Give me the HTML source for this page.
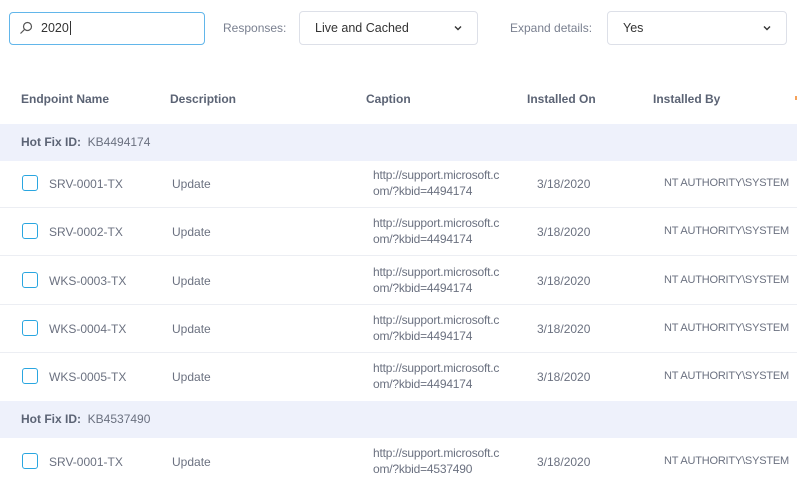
<!DOCTYPE html>
<html><head><style>
*{margin:0;padding:0;box-sizing:border-box}
body{width:797px;height:480px;overflow:hidden;background:#fff;font-family:"Liberation Sans",sans-serif;font-size:12px;color:#6b7180;position:relative}
.a{position:absolute;white-space:nowrap}
.box{position:absolute;border-radius:4px}
.h{font-weight:bold;color:#5b6374;font-size:12px}
.grp{position:absolute;left:0;width:797px;height:37px;background:#eef1fb}
.row{position:absolute;left:0;width:797px;height:48px;border-bottom:1px solid #eceef3}
.cb{position:absolute;left:22px;top:15px;width:16px;height:16px;border:1.5px solid #2aa6e0;border-radius:3px}
.row .a{top:17px}
.nt{left:664px;font-size:11px;letter-spacing:-0.2px}
.cap{position:absolute;left:373px;top:7px;line-height:16px;white-space:nowrap;letter-spacing:-0.2px}
</style></head><body>
<div class="box" style="left:9px;top:12px;width:196px;height:33px;border:1px solid #62b6ea"></div>
<svg class="a" style="left:19px;top:21px" width="14" height="14" viewBox="0 0 14 14"><circle cx="8.5" cy="5.5" r="4" fill="none" stroke="#555" stroke-width="1.2"/><line x1="5.5" y1="8.5" x2="1.5" y2="12.5" stroke="#555" stroke-width="1.2"/></svg>
<div class="a" style="left:41px;top:21px;color:#333;font-size:12.5px">2020<span style="border-left:1px solid #333;margin-left:1px"></span></div>
<div class="a" style="left:223px;top:21px;color:#7a8090">Responses:</div>
<div class="box" style="left:299px;top:11px;width:179px;height:34px;border:1px solid #dde0e8"></div>
<div class="a" style="left:315px;top:21px;color:#333;font-size:12.5px">Live and Cached</div>
<svg class="a" style="left:454px;top:25px" width="8" height="6" viewBox="0 0 8 6"><path d="M1 1.5L4 4.5L7 1.5" fill="none" stroke="#333" stroke-width="1.4"/></svg>
<div class="a" style="left:510px;top:21px;color:#7a8090">Expand details:</div>
<div class="box" style="left:607px;top:11px;width:180px;height:34px;border:1px solid #dde0e8"></div>
<div class="a" style="left:623px;top:21px;color:#333;font-size:12.5px">Yes</div>
<svg class="a" style="left:763px;top:25px" width="8" height="6" viewBox="0 0 8 6"><path d="M1 1.5L4 4.5L7 1.5" fill="none" stroke="#333" stroke-width="1.4"/></svg>

<div class="a h" style="left:21px;top:92px">Endpoint Name</div>
<div class="a h" style="left:170px;top:92px">Description</div>
<div class="a h" style="left:366px;top:92px">Caption</div>
<div class="a h" style="left:527px;top:92px">Installed On</div>
<div class="a h" style="left:653px;top:92px">Installed By</div>
<div class="a" style="left:795px;top:96px;width:2px;height:4px;background:#f5a25a"></div>

<div class="grp" style="top:124px"><div class="a" style="left:21px;top:11px"><b style="color:#5b6374">Hot Fix ID:</b>&nbsp; KB4494174</div></div>
<div class="row" style="top:160px"><div class="cb"></div><div class="a" style="left:49px">SRV-0001-TX</div><div class="a" style="left:172px">Update</div><div class="cap">http://support.microsoft.c<br>om/?kbid=4494174</div><div class="a" style="left:537px">3/18/2020</div><div class="a nt">NT AUTHORITY\SYSTEM</div></div>
<div class="row" style="top:208px"><div class="cb"></div><div class="a" style="left:49px">SRV-0002-TX</div><div class="a" style="left:172px">Update</div><div class="cap">http://support.microsoft.c<br>om/?kbid=4494174</div><div class="a" style="left:537px">3/18/2020</div><div class="a nt">NT AUTHORITY\SYSTEM</div></div>
<div class="row" style="top:257px"><div class="cb"></div><div class="a" style="left:49px">WKS-0003-TX</div><div class="a" style="left:172px">Update</div><div class="cap">http://support.microsoft.c<br>om/?kbid=4494174</div><div class="a" style="left:537px">3/18/2020</div><div class="a nt">NT AUTHORITY\SYSTEM</div></div>
<div class="row" style="top:305px"><div class="cb"></div><div class="a" style="left:49px">WKS-0004-TX</div><div class="a" style="left:172px">Update</div><div class="cap">http://support.microsoft.c<br>om/?kbid=4494174</div><div class="a" style="left:537px">3/18/2020</div><div class="a nt">NT AUTHORITY\SYSTEM</div></div>
<div class="row" style="top:353px;border-bottom:none"><div class="cb"></div><div class="a" style="left:49px">WKS-0005-TX</div><div class="a" style="left:172px">Update</div><div class="cap">http://support.microsoft.c<br>om/?kbid=4494174</div><div class="a" style="left:537px">3/18/2020</div><div class="a nt">NT AUTHORITY\SYSTEM</div></div>
<div class="grp" style="top:401px"><div class="a" style="left:21px;top:11px"><b style="color:#5b6374">Hot Fix ID:</b>&nbsp; KB4537490</div></div>
<div class="row" style="top:438px;border-bottom:none"><div class="cb"></div><div class="a" style="left:49px">SRV-0001-TX</div><div class="a" style="left:172px">Update</div><div class="cap">http://support.microsoft.c<br>om/?kbid=4537490</div><div class="a" style="left:537px">3/18/2020</div><div class="a nt">NT AUTHORITY\SYSTEM</div></div>
</body></html>
